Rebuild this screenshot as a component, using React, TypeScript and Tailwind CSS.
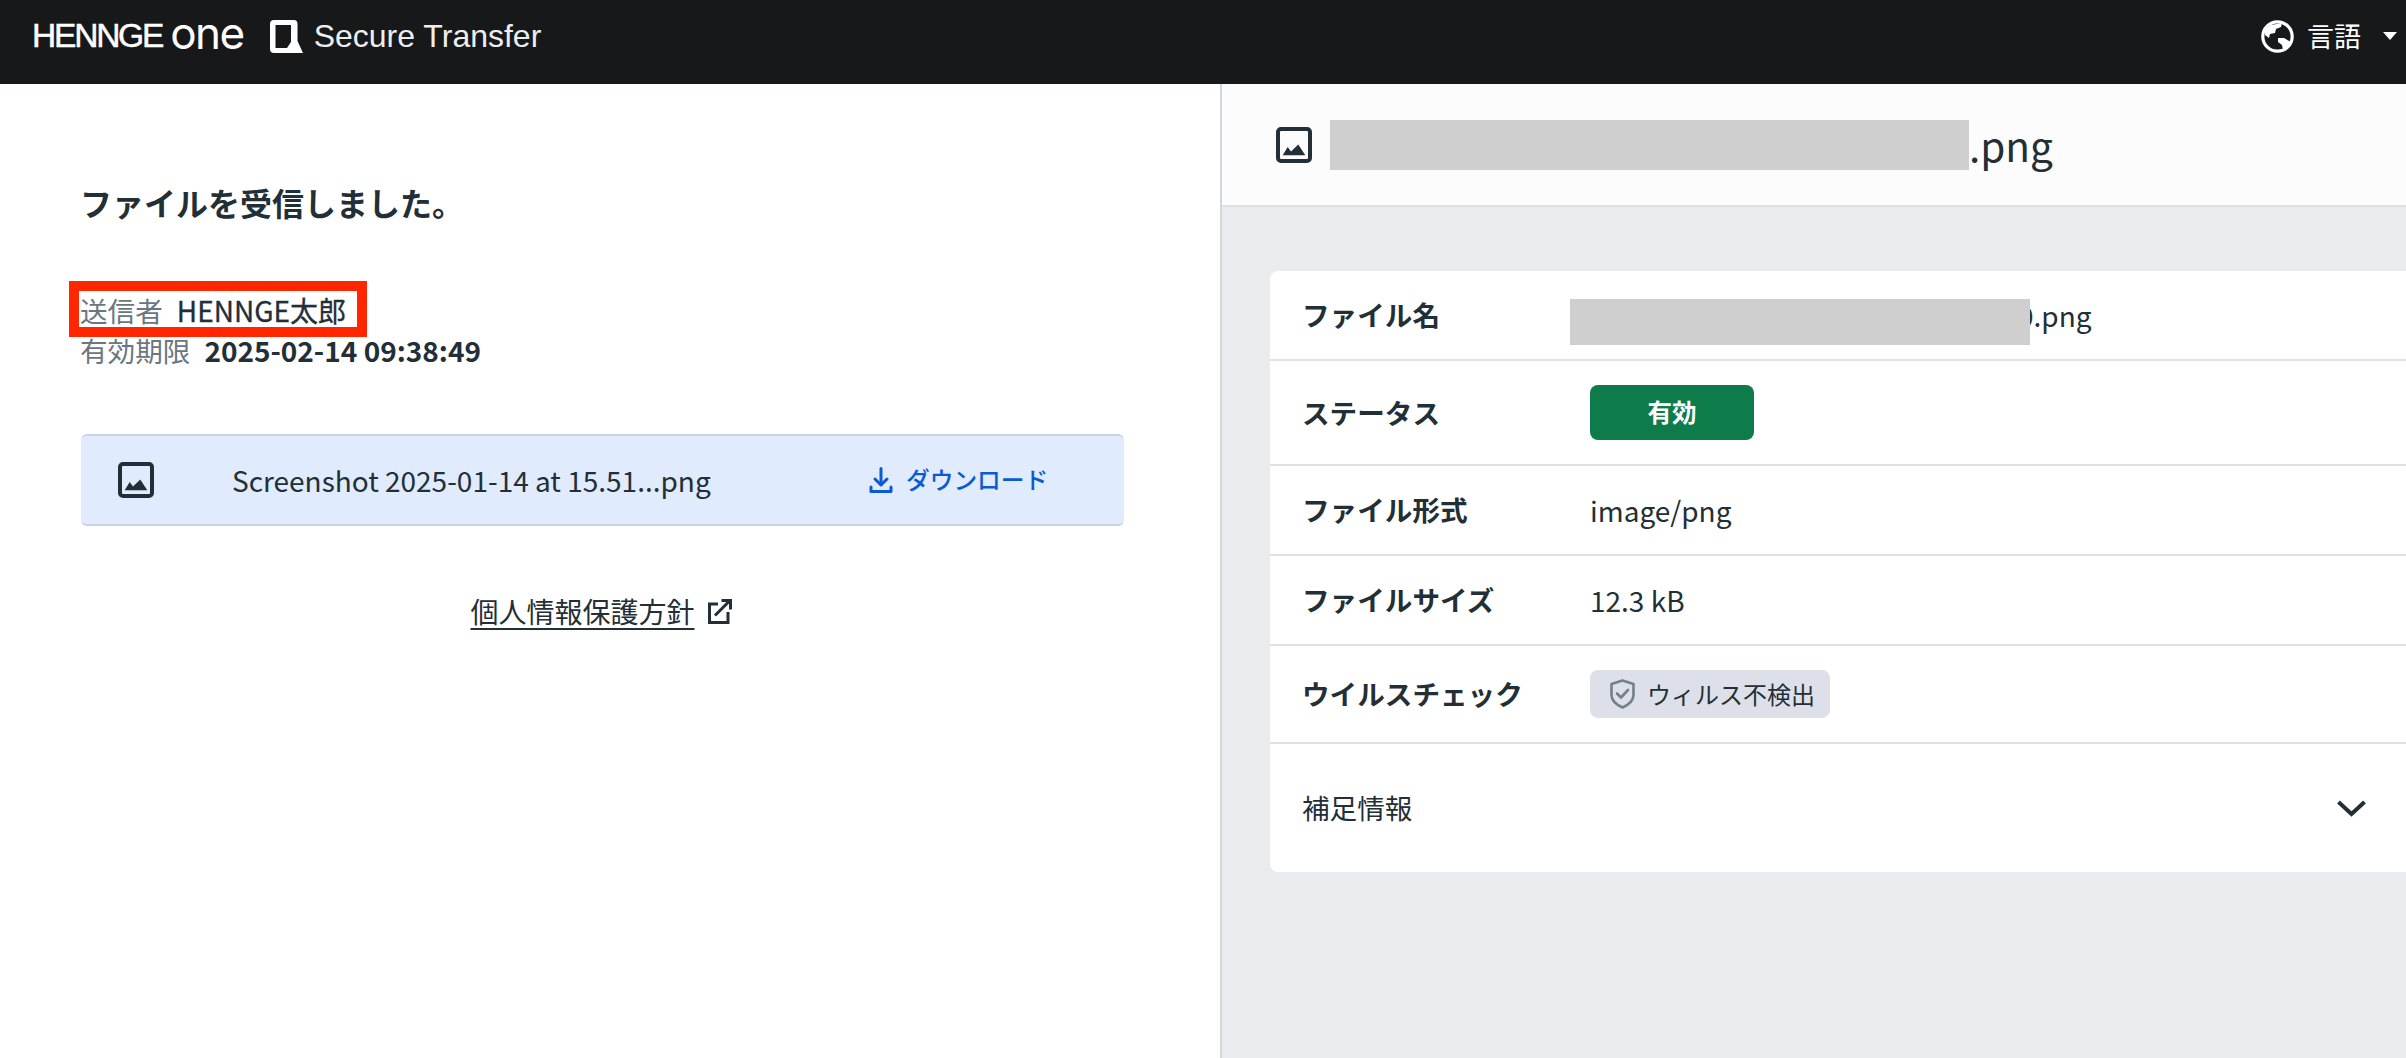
function ImageIcon({ className }: { className?: string }) {
  return (
    <svg viewBox="0 0 36 36" className={className} fill="none">
      <rect x="2" y="2" width="32" height="32" rx="3" stroke="currentColor" strokeWidth="4" />
      <path d="M6.7 28.3 L11.7 20 L15 24.5 L22.3 17.5 L29.3 28.3 Z" fill="currentColor" />
    </svg>
  );
}

function DownloadIcon({ className }: { className?: string }) {
  return (
    <svg viewBox="0 0 24 26" className={className} fill="none" stroke="currentColor" strokeWidth="3" strokeLinecap="round" strokeLinejoin="round">
      <path d="M12 1.5 V17.5" />
      <path d="M6 12 L12 18 L18 12" />
      <path d="M2 20 V24.5 H22 V20" />
    </svg>
  );
}

function ExternalIcon({ className }: { className?: string }) {
  return (
    <svg viewBox="0 0 24 25" className={className} fill="none" stroke="currentColor" strokeWidth="3" strokeLinejoin="miter">
      <path d="M10 5 H1.5 V23.5 H20 V13" />
      <path d="M7 16.5 L22.5 1" />
      <path d="M13.5 1.5 H22.5 V10.5" />
    </svg>
  );
}

function ShieldIcon({ className }: { className?: string }) {
  return (
    <svg viewBox="0 0 25 30" className={className} fill="none" stroke="currentColor" strokeWidth="2.6" strokeLinejoin="round" strokeLinecap="round">
      <path d="M12.5 1.5 L23.5 5 V16 C23.5 22 18 26 12.5 28.5 C7 26 1.5 22 1.5 16 V5 Z" />
      <path d="M7 14.5 L11 18.5 L18 11" />
    </svg>
  );
}

function GlobeIcon({ className }: { className?: string }) {
  return (
    <svg viewBox="0 0 33 33" className={className} fill="none">
      <circle cx="16.5" cy="16.5" r="14.7" stroke="currentColor" strokeWidth="3.2" />
      <path d="M4 9 L10 5 L21 3 L20 7 L15 9 L14 13 L9 14 L8 18 L4 15 Z" fill="currentColor" />
      <path d="M17 18 L23 18 L30 22 L27 28 L22 30 L21 25 L17 22 Z" fill="currentColor" />
    </svg>
  );
}

function LogoMark({ className }: { className?: string }) {
  return (
    <svg viewBox="0 0 33 33" className={className}>
      <path
        fillRule="evenodd"
        fill="currentColor"
        d="M4 0 H24 Q27.5 0 27.5 4 V21 L33 33 H4 Q0 33 0 29 V4 Q0 0 4 0 Z M5.5 5 V28 H17 L21 22 V5 Z"
      />
    </svg>
  );
}

const rows = [
  { label: "ステータス", rowClass: "h-[105px]" },
  { label: "ファイル形式", rowClass: "h-[90px]", value: "image/png" },
  { label: "ファイルサイズ", rowClass: "h-[90px]", value: "12.3 kB" },
];

export default function App() {
  return (
    <div className="h-[1058px] overflow-hidden bg-white text-[#232f36] font-['Noto_Sans_CJK_JP','Noto_Sans',sans-serif] text-[27.6px]">
      <header className="flex h-[84px] items-center justify-between bg-[#17181a] pb-[12px] pl-[32px] pr-[9px] text-white">
        <div className="flex items-center">
          <span className="font-['Liberation_Sans',sans-serif] text-[33.5px] leading-none tracking-[-2.2px] [-webkit-text-stroke:0.5px_white]">HENNGE</span>
          <span className="ml-[8px] -translate-y-[3px] font-['Inter',sans-serif] text-[44px] font-normal leading-none tracking-[-1.5px]">one</span>
          <LogoMark className="ml-[26px] h-[33px] w-[33px]" />
          <span className="ml-[11px] font-['Liberation_Sans',sans-serif] text-[32px] font-normal text-[#eeeeee]">Secure Transfer</span>
        </div>
        <div className="flex items-center">
          <GlobeIcon className="h-[33px] w-[33px]" />
          <span className="ml-[13px] text-[27px]">言語</span>
          <span className="ml-[22px] h-0 w-0 border-x-[7px] border-t-[8px] border-x-transparent border-t-white" />
        </div>
      </header>

      <div className="flex h-[974px]">
        <main className="w-[1222px] border-r-2 border-[#d3d7db] pl-[81px] pr-[96px] pt-[96px]">
          <h1 className="-ml-[1px] text-[32px] font-bold leading-[44px]">ファイルを受信しました。</h1>
          <div className="relative mt-[66px] leading-[40px]">
            <div className="-ml-[1px] flex">
              <span className="text-[#6a7680]">送信者</span>
              <span className="ml-[14px] text-[28px] [-webkit-text-stroke:0.3px_#232f36]">HENNGE太郎</span>
            </div>
            <div className="-ml-[1px] flex">
              <span className="text-[#6a7680]">有効期限</span>
              <span className="ml-[14px] text-[28px] font-bold">2025-02-14 09:38:49</span>
            </div>
            {/* annotation box drawn over the sender line */}
            <div className="absolute left-[-12px] top-[-9px] h-[56px] w-[298px] border-[10px] border-[#ff2600]" />
          </div>

          <div className="mt-[64px] flex h-[92px] items-center rounded-[6px] border-y-2 border-[#c8d3e4] bg-[#e0ebfd] pl-[37px]">
            <ImageIcon className="h-[36px] w-[36px]" />
            <span className="ml-[78px] w-[637px] text-[28px]">Screenshot 2025-01-14 at 15.51...png</span>
            <DownloadIcon className="h-[26px] w-[24px] text-[#0a5bd3]" />
            <span className="ml-[13px] text-[23.7px] font-medium text-[#0a5bd3]">ダウンロード</span>
          </div>

          <div className="mt-[64px] flex items-center justify-center pr-[3px]">
            <a className="text-[28px] underline underline-offset-[5px]">個人情報保護方針</a>
            <ExternalIcon className="ml-[13px] h-[25px] w-[24px]" />
          </div>
        </main>

        <section className="flex-1 bg-[#e8ecef]">
          <div className="flex h-[123px] items-center border-b-2 border-[#dfe1e3] bg-[#fcfcfc] pl-[54px]">
            <ImageIcon className="h-[36px] w-[36px]" />
            <div className="relative ml-[18px] pl-[639px] text-[40.5px] leading-[50px]">
              .png
              <div className="absolute left-0 top-0 h-[50px] w-[639px] bg-[#cfcfcf]" />
            </div>
          </div>

          <div className="ml-[48px] mt-[64px] rounded-l-[8px] bg-white">
            <div className="flex h-[90px] items-center border-b-2 border-[#dfe1e3] pl-[32px]">
              <span className="w-[288px] font-bold">ファイル名</span>
              <span className="relative pl-[428px] text-[28px]">
                0.png
                <span className="absolute left-[-20px] top-[5px] h-[46px] w-[460px] bg-[#cfcfcf]" />
              </span>
            </div>
            {rows.map((row) => (
              <div key={row.label} className={`flex items-center border-b-2 border-[#dfe1e3] pl-[32px] ${row.rowClass}`}>
                <span className="w-[288px] font-bold">{row.label}</span>
                {row.value ? (
                  <span className="text-[28px]">{row.value}</span>
                ) : (
                  <span className="flex h-[55px] w-[164px] items-center justify-center rounded-[8px] bg-[#0e7c4a] text-[24.5px] font-bold text-white">有効</span>
                )}
              </div>
            ))}
            <div className="flex h-[98px] items-center border-b-2 border-[#dfe1e3] pl-[32px]">
              <span className="w-[288px] font-bold">ウイルスチェック</span>
              <span className="flex h-[48px] w-[240px] items-center rounded-[8px] bg-[#dde0e8] pl-[20px] text-[24px]">
                <ShieldIcon className="h-[30px] w-[25px] text-[#757f88]" />
                <span className="ml-[12px]">ウィルス不検出</span>
              </span>
            </div>
            <div className="flex h-[128px] items-center justify-between pl-[32px] pr-[40px]">
              <span>補足情報</span>
              <svg viewBox="0 0 29 17" className="h-[17px] w-[29px]" fill="none" stroke="currentColor" strokeWidth="4">
                <path d="M1.5 2 L14.5 14 L27.5 2" />
              </svg>
            </div>
          </div>
        </section>
      </div>
    </div>
  );
}
